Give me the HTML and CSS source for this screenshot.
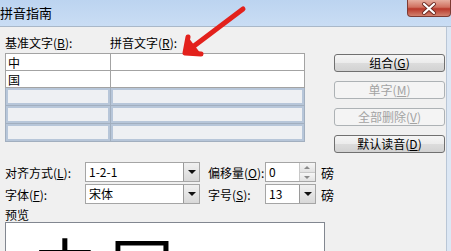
FILE: index.html
```html
<!DOCTYPE html>
<html lang="zh-CN">
<head>
    <meta charset="UTF-8">
    <title>拼音指南</title>
    <link rel="stylesheet" href="styles.css">
</head>
<body>
    <div class="window">
        <div class="titlebar">
            <span class="title">拼音指南</span>
            <span class="close">
                <svg width="44" height="17" viewBox="0 0 44 17">
                    <path d="M16 4 L26 13 M26 4 L16 13" stroke="#6b2a22" stroke-width="4" stroke-linecap="round"/>
                    <path d="M16 4 L26 13 M26 4 L16 13" stroke="#fff" stroke-width="2.2" stroke-linecap="round"/>
                </svg>
            </span>
        </div>
        <div class="frame">
            <div class="content">
                <div class="top">
                    <div class="ruby">
                        <div class="ruby-labels">
                            <span class="col-base">基准文字(<u>B</u>):</span>
                            <span>拼音文字(<u>R</u>):</span>
                        </div>
                        <table class="ruby-table">
                            <tr class="filled"><td>中</td><td></td></tr>
                            <tr class="filled"><td>国</td><td></td></tr>
                            <tr class="empty"><td></td><td></td></tr>
                            <tr class="empty"><td></td><td></td></tr>
                            <tr class="empty"><td></td><td></td></tr>
                        </table>
                    </div>
                    <div class="buttons">
                        <button class="btn">组合(<u>G</u>)</button>
                        <button class="btn" disabled>单字(<u>M</u>)</button>
                        <button class="btn" disabled>全部删除(<u>V</u>)</button>
                        <button class="btn">默认读音(<u>D</u>)</button>
                    </div>
                </div>

                <div class="options">
                    <span>对齐方式(<u>L</u>):</span>
                    <div class="combo"><span class="value">1-2-1</span><span class="drop"></span></div>
                    <span>偏移量(<u>O</u>):</span>
                    <div class="combo small"><span class="value">0</span><span class="spin"><i class="up"></i><i class="down"></i></span></div>
                    <span>磅</span>

                    <span>字体(<u>F</u>):</span>
                    <div class="combo"><span class="value">宋体</span><span class="drop"></span></div>
                    <span>字号(<u>S</u>):</span>
                    <div class="combo small"><span class="value">13</span><span class="drop"></span></div>
                    <span>磅</span>
                </div>

                <div class="preview-label">预览</div>
                <div class="preview"><span>中国</span></div>
            </div>
        </div>

        <svg class="arrow" width="451" height="251" viewBox="0 0 451 251">
            <path d="M243 9 L190 49" stroke="#e3211c" stroke-width="5" stroke-linecap="round"/>
            <path d="M188 37 L185 53 L201 54" fill="#e3211c" stroke="#e3211c" stroke-width="5" stroke-linecap="round" stroke-linejoin="round"/>
        </svg>
    </div>
</body>
</html>
```

FILE: styles.css
```css
* { box-sizing: border-box; }
body {
    margin: 0;
    background: #f0f0f0;
    font-family: "Noto Sans CJK SC", "Liberation Sans", sans-serif;
    font-size: 12px;
    color: #000;
}
u { text-decoration: underline; text-underline-offset: 1px; }
.window {
    position: relative;
    width: 451px;
    height: 251px;
    overflow: hidden;
}
.titlebar {
    display: flex;
    height: 27px;
    background: linear-gradient(#bcd4f0, #c9ddf4);
    border-bottom: 1px solid #a9b8c9;
}
.title {
    font-size: 13px;
    line-height: 26px;
}
.close {
    margin-left: auto;
    width: 44px;
    height: 17px;
    border: 1px solid #7d3b33;
    border-top: none;
    border-radius: 0 0 4px 4px;
    background: linear-gradient(#e6ae9f, #d0705f 45%, #b8382a 55%, #d2826f);
}
.close svg { display: block; }
.frame {
    display: flex;
    height: 224px;
}
.content {
    width: 447px;
    padding: 6px 0 0 5px;
    border-right: 1px solid #b9c6d6;
}
.frame::after {
    content: "";
    flex: 1;
    background: #dce7f4;
}
.top {
    display: flex;
    align-items: flex-start;
}
.ruby { width: 300px; }
.ruby-labels {
    display: flex;
    height: 20px;
    line-height: 20px;
}
.col-base { width: 105px; }
.ruby-table {
    width: 300px;
    border-collapse: collapse;
    table-layout: fixed;
}
.ruby-table td:first-child { width: 105px; }
.ruby-table td {
    padding: 0 0 0 2px;
    font-size: 12px;
    line-height: 15px;
}
.filled td {
    height: 17px;
    background: #fff;
    border: 1px solid #a3a3a3;
}
.empty td {
    height: 18px;
    background: #eef0f3;
    border: 1px solid #a2afbf;
    box-shadow: inset 0 0 0 2px #b7c6d9;
}
.buttons {
    display: flex;
    flex-direction: column;
    gap: 9px;
    margin: 21px 0 0 29px;
}
.btn {
    width: 111px;
    height: 18px;
    padding: 0;
    font: inherit;
    line-height: 16px;
    color: #000;
    border: 1px solid #707070;
    border-radius: 3px;
    background: linear-gradient(#f5f5f5, #ebebeb 50%, #dcdcdc 51%, #d2d2d2);
}
.btn:disabled {
    color: #a3a3a3;
    border-color: #adb2b5;
    background: #f4f4f4;
}
.options {
    display: grid;
    grid-template-columns: 80px 115px 65px 51px auto;
    grid-auto-rows: 20px;
    row-gap: 2px;
    align-items: center;
    margin-top: 9px;
    width: 340px;
}
.options > span:nth-child(3),
.options > span:nth-child(8) { margin-left: 8px; }
.options > span:nth-child(5),
.options > span:nth-child(10) { margin-left: 5px; font-size: 13px; }
.combo {
    display: flex;
    height: 20px;
    background: #fff;
    border: 1px solid #a5a5a5;
}
.combo .value {
    flex: 1;
    padding-left: 3px;
    line-height: 18px;
}
.drop {
    position: relative;
    width: 16px;
    border-left: 1px solid #9a9a9a;
    background: linear-gradient(#f0f0f0, #d8d8d8);
}
.drop::after {
    content: "";
    position: absolute;
    left: 4px;
    top: 7px;
    border: 4px solid transparent;
    border-top: 4px solid #111;
    border-bottom: none;
}
.spin {
    display: flex;
    flex-direction: column;
    width: 16px;
    border-left: 1px solid #c8c8c8;
}
.spin i {
    position: relative;
    flex: 1;
    background: linear-gradient(#f6f6f6, #e2e2e2);
}
.spin i + i { border-top: 1px solid #c8c8c8; }
.spin i::after {
    content: "";
    position: absolute;
    left: 4px;
    top: 3px;
    border: 3px solid transparent;
}
.spin .up::after { border-bottom: 3px solid #8a8a8a; border-top: none; }
.spin .down::after { border-top: 3px solid #8a8a8a; border-bottom: none; }
.preview-label {
    margin-top: 4px;
    height: 14px;
    line-height: 14px;
}
.preview {
    width: 320px;
    height: 60px;
    background: #fff;
    border: 1px solid #828790;
    padding: 9px 0 0 27px;
    font-size: 64px;
    line-height: 1;
    letter-spacing: 13px;
}
.arrow {
    position: absolute;
    left: 0;
    top: 0;
    pointer-events: none;
}
```
